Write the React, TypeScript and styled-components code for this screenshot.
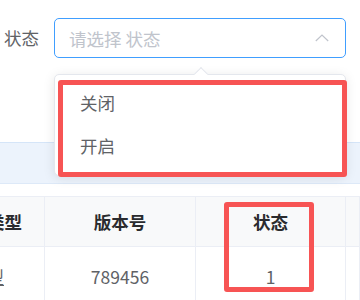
import React from 'react';
import styled, { createGlobalStyle } from 'styled-components';

const Global = createGlobalStyle`
  html, body { margin: 0; padding: 0; background: #fff; }
  body {
    font-family: "Noto Sans CJK SC", "Noto Sans", sans-serif;
    width: 360px;
    height: 300px;
    overflow: hidden;
  }
`;

const Page = styled.div`
  position: relative;
  width: 360px;
  height: 300px;
  overflow: hidden;
`;

const FormRow = styled.div`
  display: flex;
  align-items: center;
  padding: 18px 0 0 4px;
`;

const Label = styled.label`
  width: 50px;
  font-size: 17.5px;
  color: #606266;
  line-height: 40px;
`;

const SelectBox = styled.div`
  box-sizing: border-box;
  width: 292px;
  height: 40px;
  border: 1px solid #409eff;
  border-radius: 5px;
  padding: 0 16px 0 14px;
  display: flex;
  align-items: center;
  justify-content: space-between;
`;

const Placeholder = styled.span`
  font-size: 17.5px;
  color: #c0c4cc;
`;

const Band = styled.div`
  box-sizing: border-box;
  margin-top: 84px;
  height: 42px;
  background: #ecf3fc;
  border-top: 1px solid #d5e5f8;
  border-bottom: 1px solid #dde9f8;
`;

const Table = styled.div`
  margin-top: 12px;
  display: grid;
  grid-template-columns: 45px 151px 150px 1fr;
  border-top: 1px solid #ebeef5;
`;

const Cell = styled.div<{ $head?: boolean; $pr?: number }>`
  box-sizing: border-box;
  height: ${p => (p.$head ? 50 : 60)}px;
  display: flex;
  align-items: center;
  justify-content: ${p => (p.$pr !== undefined ? 'flex-end' : 'center')};
  padding-right: ${p => p.$pr ?? 0}px;
  overflow: hidden;
  white-space: nowrap;
  border-right: 1px solid #ebeef5;
  border-bottom: 1px solid #ebeef5;
  background: ${p => (p.$head ? '#f8f9fa' : '#fff')};
  font-size: 17.5px;
  font-weight: ${p => (p.$head ? 700 : 400)};
  color: ${p => (p.$head ? '#2a2b2e' : '#606266')};
`;

const LinkText = styled.span`
  text-decoration: underline;
`;

const Dropdown = styled.div`
  position: absolute;
  left: 54px;
  top: 73.5px;
  width: 292px;
  box-sizing: border-box;
  background: #fff;
  border: 1px solid #e4e7ed;
  border-radius: 5px;
  box-shadow: 0 2px 12px 0 rgba(0, 0, 0, 0.1);
  padding: 7.5px 0;
`;

const Arrow = styled.div`
  position: absolute;
  top: -5.5px;
  left: 141px;
  width: 9px;
  height: 9px;
  background: #fff;
  border-left: 1px solid #e4e7ed;
  border-top: 1px solid #e4e7ed;
  transform: rotate(45deg);
`;

const Option = styled.div`
  height: 42.5px;
  line-height: 42.5px;
  padding: 0 25px;
  font-size: 17.5px;
  color: #606266;
`;

const Highlight = styled.div<{ $x: number; $y: number; $w: number; $h: number }>`
  position: absolute;
  left: ${p => p.$x}px;
  top: ${p => p.$y}px;
  width: ${p => p.$w}px;
  height: ${p => p.$h}px;
  box-sizing: border-box;
  border: 5.5px solid #f75454;
  border-radius: 3px;
  pointer-events: none;
`;

const ChevronUp = () => (
  <svg width="14" height="8" viewBox="0 0 14 8" fill="none">
    <polyline points="0.8,7 7,1 13.2,7" stroke="#c0c4cc" strokeWidth="1.2" fill="none" />
  </svg>
);

export default function App() {
  return (
    <Page>
      <Global />
      <FormRow>
        <Label>状态</Label>
        <SelectBox>
          <Placeholder>请选择 状态</Placeholder>
          <ChevronUp />
        </SelectBox>
      </FormRow>
      <Band />
      <Table>
        <Cell $head $pr={22}>类型</Cell>
        <Cell $head>版本号</Cell>
        <Cell $head>状态</Cell>
        <Cell $head />
        <Cell $pr={40}><LinkText>类型</LinkText></Cell>
        <Cell>789456</Cell>
        <Cell>1</Cell>
        <Cell />
      </Table>
      <Dropdown>
        <Arrow />
        <Option>关闭</Option>
        <Option>开启</Option>
      </Dropdown>
      <Highlight $x={57.5} $y={80} $w={289.5} $h={97} />
      <Highlight $x={224} $y={201.5} $w={90} $h={90} />
    </Page>
  );
}
